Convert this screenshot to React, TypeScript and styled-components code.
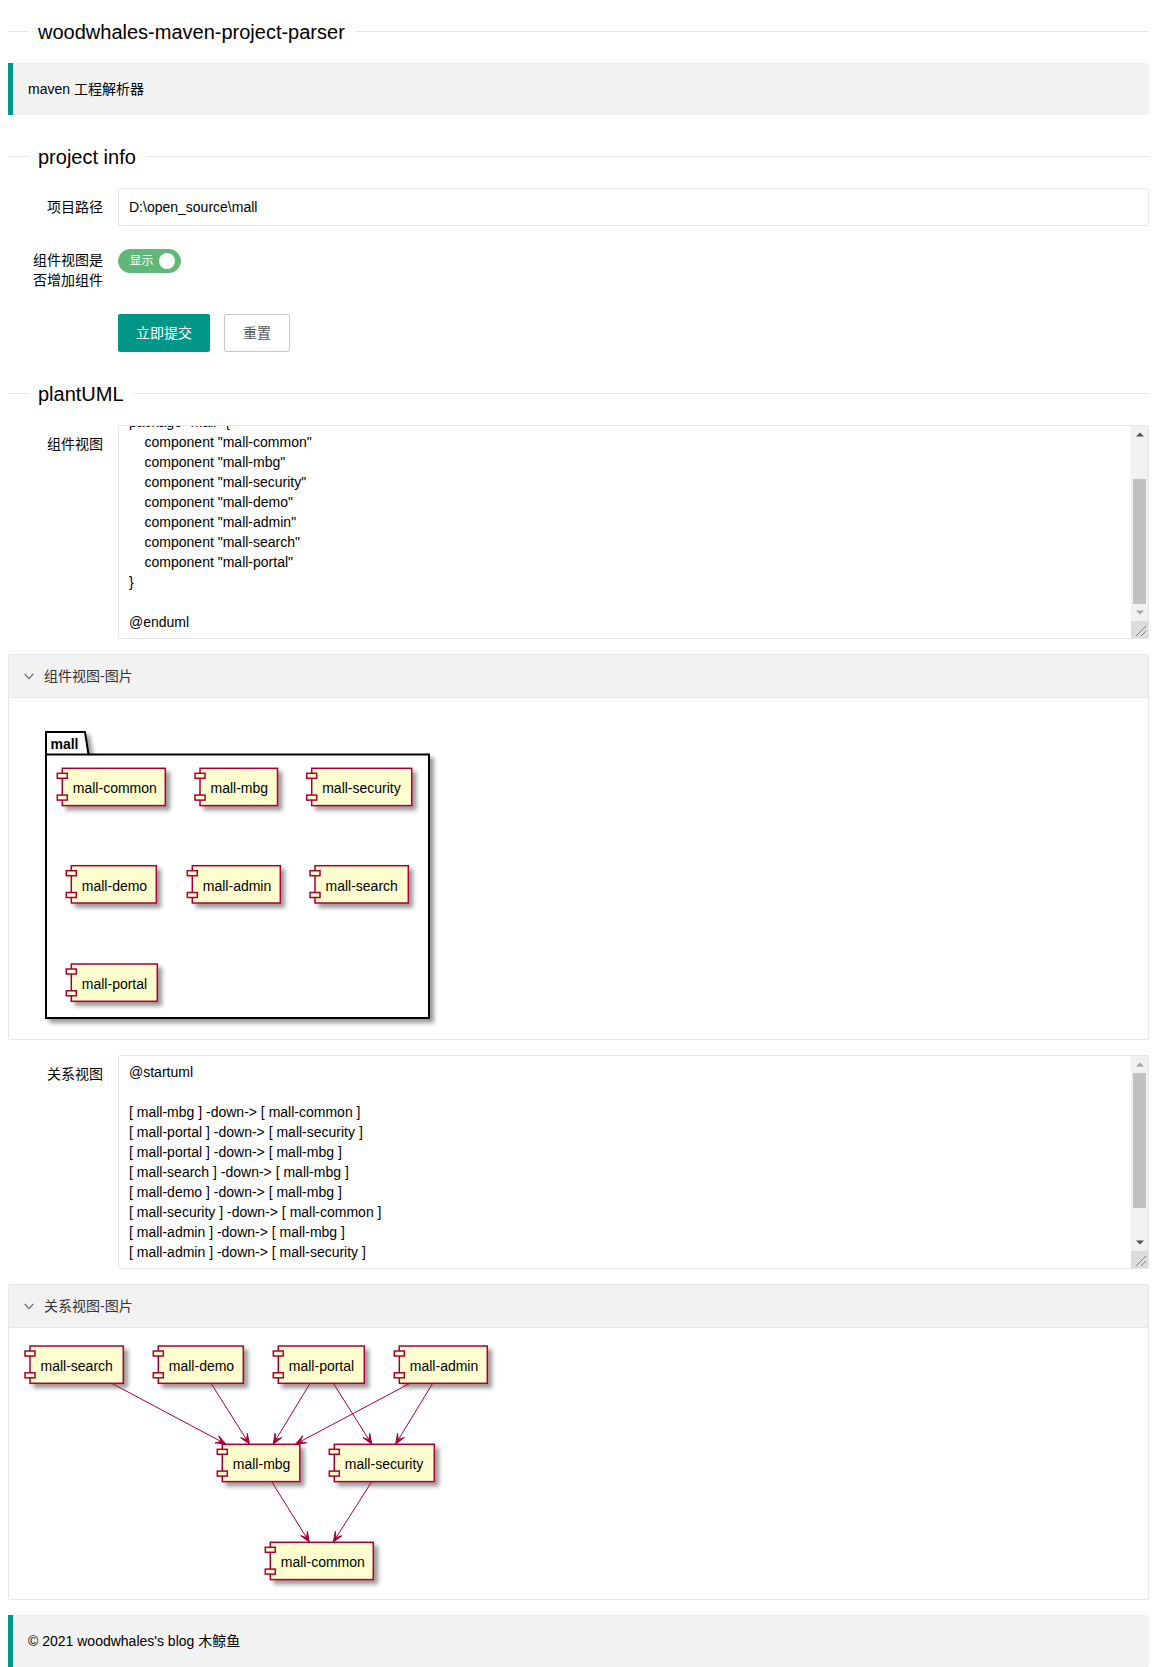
import React, { useLayoutEffect, useRef, useState } from "react";
import styled, { createGlobalStyle } from "styled-components";

const FONT = `"Liberation Sans", Arial, "Noto Sans CJK SC", sans-serif`;
const TEAL = "#009688";
const BORDER = "#e6e6e6";
const SB = 17;

const GlobalStyle = createGlobalStyle`
  html, body {
    margin: 0;
    padding: 0;
    background: #fff;
  }
  body {
    font-family: ${FONT};
    font-size: 14px;
    line-height: 24px;
    color: #000;
  }
`;

const Page = styled.div`
  padding: 20px 8px 0;
`;

const SectionTitle = styled.div<{ $mt?: number }>`
  display: flex;
  align-items: flex-start;
  height: 24px;
  margin-top: ${(p) => p.$mt ?? 0}px;
  font-size: 20px;
  font-weight: 300;
  color: #000;

  &::before,
  &::after {
    content: "";
    height: 0;
    margin-top: 11px;
    border-top: 1px solid ${BORDER};
  }
  &::before {
    width: 20px;
    flex: none;
  }
  &::after {
    flex: 1;
  }
`;

const TitleText = styled.span`
  padding: 0 10px;
  line-height: 24px;
  white-space: nowrap;
`;

const Quote = styled.div<{ $mt: number }>`
  margin-top: ${(p) => p.$mt}px;
  padding: 15px;
  line-height: 22px;
  border-left: 5px solid ${TEAL};
  border-radius: 0 2px 2px 0;
  background-color: #f2f2f2;
  color: #000;
`;

const Form = styled.div<{ $mt: number }>`
  display: flex;
  flex-direction: column;
  gap: 15px;
  margin-top: ${(p) => p.$mt}px;
`;

const FormItem = styled.div`
  display: flex;
  align-items: flex-start;
`;

const Label = styled.label`
  flex: 0 0 110px;
  box-sizing: border-box;
  padding: 9px 15px;
  line-height: 20px;
  text-align: right;
`;

const Field = styled.div`
  flex: 1;
  min-width: 0;
`;

const TextInput = styled.input`
  display: block;
  box-sizing: border-box;
  width: 100%;
  height: 38px;
  padding: 0 10px;
  border: 1px solid ${BORDER};
  border-radius: 2px;
  background: #fff;
  font: 14px ${FONT};
  line-height: 1.3;
  color: #000;
  outline: none;
`;

const Switch = styled.div`
  display: inline-flex;
  align-items: center;
  height: 22px;
  padding: 0 5px;
  margin-top: 8px;
  border: 1px solid #5fb878;
  border-radius: 20px;
  background-color: #5fb878;
`;

const SwitchText = styled.em`
  width: 25px;
  margin-left: 5px;
  font-style: normal;
  font-size: 12px;
  line-height: 22px;
  text-align: center;
  color: #fff;
  white-space: nowrap;
`;

const Knob = styled.i`
  width: 16px;
  height: 16px;
  margin-left: 5px;
  border-radius: 50%;
  background-color: #fff;
`;

const ButtonRow = styled.div`
  display: flex;
  gap: 14px;
`;

const Button = styled.button<{ $primary?: boolean }>`
  box-sizing: border-box;
  height: 38px;
  padding: 0 18px;
  border: ${(p) => (p.$primary ? "none" : "1px solid #C9C9C9")};
  border-radius: 2px;
  background-color: ${(p) => (p.$primary ? TEAL : "#fff")};
  color: ${(p) => (p.$primary ? "#fff" : "#555")};
  font: 14px ${FONT};
  line-height: ${(p) => (p.$primary ? 38 : 36)}px;
  white-space: nowrap;
  cursor: pointer;
`;

const ScrollBox = styled.div`
  position: relative;
`;

const CodeArea = styled.textarea`
  display: block;
  box-sizing: border-box;
  width: 100%;
  height: 214px;
  padding: 6px ${10 + SB}px 6px 10px;
  border: 1px solid ${BORDER};
  border-radius: 2px;
  background: #fff;
  font: 14px ${FONT};
  line-height: 20px;
  color: #000;
  resize: vertical;
  outline: none;
  scrollbar-width: none;
`;

/* drawn scrollbar that lies over the right edge of the textarea */
const FakeScrollbar = styled.div`
  position: absolute;
  top: 1px;
  right: 1px;
  bottom: 1px;
  width: ${SB}px;
  display: flex;
  flex-direction: column;
  background-color: #f1f1f1;
  pointer-events: none;
`;

const SbButton = styled.div`
  flex: none;
  height: ${SB}px;
  display: flex;
  align-items: center;
  justify-content: center;
`;

const SbTrack = styled.div`
  flex: 1;
  min-height: 0;
  overflow: hidden;
`;

const SbThumb = styled.div`
  margin: 0 2px;
  background-color: #c1c1c1;
`;

const SbCorner = styled.div`
  flex: none;
  height: ${SB}px;
  background-color: #dcdcdc;
`;

const Collapse = styled.div`
  margin-top: 15px;
  border: 1px solid ${BORDER};
  border-radius: 2px;
`;

const CollaTitle = styled.div`
  display: flex;
  align-items: center;
  height: 42px;
  padding: 0 15px;
  background-color: #f2f2f2;
  color: #333;
  line-height: 42px;
`;

const CollaIcon = styled.svg`
  flex: none;
  margin-right: 10px;
`;

const CollaContent = styled.div`
  padding: 10px 15px;
  border-top: 1px solid ${BORDER};
`;

const Diagram = styled.svg`
  display: block;
`;

function SbArrow({ up, disabled }: { up: boolean; disabled: boolean }) {
  const c = disabled ? "#a3a3a3" : "#505050";
  return (
    <svg width={8} height={5} viewBox="0 0 8 5">
      <polygon points={up ? "0,4.5 4,0.5 8,4.5" : "0,0.5 4,4.5 8,0.5"} fill={c} />
    </svg>
  );
}

function CodeBox({ value, toEnd }: { value: string; toEnd?: boolean }) {
  const ref = useRef<HTMLTextAreaElement>(null);
  const [sb, setSb] = useState({ top: 0, len: 0, atTop: true, atBottom: false });

  const measure = () => {
    const el = ref.current;
    if (!el) return;
    const track = el.clientHeight - SB * 3;
    const len = Math.max(20, (track * el.clientHeight) / el.scrollHeight);
    const max = el.scrollHeight - el.clientHeight;
    const top = max > 0 ? ((track - len) * el.scrollTop) / max : 0;
    setSb({ top, len, atTop: el.scrollTop <= 0, atBottom: el.scrollTop >= max - 1 });
  };

  useLayoutEffect(() => {
    const el = ref.current;
    if (el && toEnd) el.scrollTop = el.scrollHeight;
    measure();
  }, []);

  return (
    <ScrollBox>
      <CodeArea ref={ref} defaultValue={value} spellCheck={false} onScroll={measure} />
      <FakeScrollbar>
        <SbButton>
          <SbArrow up disabled={sb.atTop} />
        </SbButton>
        <SbTrack>
          <SbThumb style={{ marginTop: sb.top, height: sb.len }} />
        </SbTrack>
        <SbButton>
          <SbArrow up={false} disabled={sb.atBottom} />
        </SbButton>
        <SbCorner>
          <svg width={SB} height={SB} viewBox="0 0 17 17">
            <line x1={5} y1={15} x2={15} y2={5} stroke="#808080" strokeWidth={1} />
            <line x1={10} y1={15} x2={15} y2={10} stroke="#808080" strokeWidth={1} />
          </svg>
        </SbCorner>
      </FakeScrollbar>
    </ScrollBox>
  );
}

const PINK = "#A80036";
const FILL = "#FEFECE";
const CH = 37.3;
const WIDTHS: Record<string, number> = {
  "mall-common": 103,
  "mall-mbg": 77.5,
  "mall-security": 100,
  "mall-demo": 85,
  "mall-admin": 88,
  "mall-search": 93.3,
  "mall-portal": 86,
};

function ShadowDef({ id }: { id: string }) {
  return (
    <defs>
      <filter id={id} x="-1" y="-1" width="300%" height="300%">
        <feGaussianBlur in="SourceAlpha" stdDeviation="2" result="b" />
        <feColorMatrix
          in="b"
          type="matrix"
          values="0 0 0 0 0  0 0 0 0 0  0 0 0 0 0  0 0 0 .4 0"
          result="b2"
        />
        <feOffset in="b2" dx="4" dy="4" result="b3" />
        <feBlend in="SourceGraphic" in2="b3" mode="normal" />
      </filter>
    </defs>
  );
}

function UmlComp({ name, x, y, shadow }: { name: string; x: number; y: number; shadow: string }) {
  const w = WIDTHS[name];
  return (
    <g>
      <rect x={x} y={y} width={w} height={CH} fill={FILL} stroke={PINK} strokeWidth={1.5} filter={`url(#${shadow})`} />
      <rect x={x - 5} y={y + 5} width={10} height={5} fill={FILL} stroke={PINK} strokeWidth={1.5} />
      <rect x={x - 5} y={y + CH - 10.5} width={10} height={5} fill={FILL} stroke={PINK} strokeWidth={1.5} />
      <text x={x + 10.5} y={y + 25} fontSize={14} fontFamily={FONT} fill="#000">
        {name}
      </text>
    </g>
  );
}

function Arrow({ x1, y1, x2, y2 }: { x1: number; y1: number; x2: number; y2: number }) {
  const dx = x2 - x1;
  const dy = y2 - y1;
  const len = Math.hypot(dx, dy);
  const ux = dx / len;
  const uy = dy / len;
  const nx = -uy;
  const ny = ux;
  const back = 10;
  const half = 4;
  const notch = 5;
  const pts = [
    [x2, y2],
    [x2 - ux * back + nx * half, y2 - uy * back + ny * half],
    [x2 - ux * notch, y2 - uy * notch],
    [x2 - ux * back - nx * half, y2 - uy * back - ny * half],
  ]
    .map((p) => p.map((v) => v.toFixed(2)).join(","))
    .join(" ");
  return (
    <g>
      <line x1={x1} y1={y1} x2={x2 - ux * notch} y2={y2 - uy * notch} stroke={PINK} strokeWidth={1} />
      <polygon points={pts} fill={PINK} stroke={PINK} strokeWidth={1} />
    </g>
  );
}

function PackageDiagram() {
  const s = "shadowPkg";
  const comps = [
    { name: "mall-common", x: 38.3, y: 60.3 },
    { name: "mall-mbg", x: 176, y: 60.3 },
    { name: "mall-security", x: 287.7, y: 60.3 },
    { name: "mall-demo", x: 47.3, y: 157.7 },
    { name: "mall-admin", x: 168.3, y: 157.7 },
    { name: "mall-search", x: 291, y: 157.7 },
    { name: "mall-portal", x: 47.3, y: 256 },
  ];
  return (
    <Diagram width={440} height={321} viewBox="0 0 440 321">
      <ShadowDef id={s} />
      <path
        d="M22 24 H61 L64.5 46.5 H405 V310 H22 Z"
        fill="#fff"
        stroke="#000"
        strokeWidth={2}
        filter={`url(#${s})`}
      />
      <line x1={22} y1={46.5} x2={64.5} y2={46.5} stroke="#000" strokeWidth={2} />
      <text x={26.5} y={40.5} fontSize={14} fontWeight="bold" fontFamily={FONT} fill="#000">
        mall
      </text>
      {comps.map((c) => (
        <UmlComp key={c.name} {...c} shadow={s} />
      ))}
    </Diagram>
  );
}

function RelationDiagram() {
  const s = "shadowRel";
  const comps = [
    { name: "mall-search", x: 6, y: 8 },
    { name: "mall-demo", x: 134.3, y: 8 },
    { name: "mall-portal", x: 254.3, y: 8 },
    { name: "mall-admin", x: 375.3, y: 8 },
    { name: "mall-mbg", x: 198.3, y: 106.3 },
    { name: "mall-security", x: 310.3, y: 106.3 },
    { name: "mall-common", x: 246.3, y: 204.3 },
  ];
  const arrows = [
    [87.7, 45.3, 201.7, 106],
    [187, 45.3, 225.3, 106],
    [286, 45.3, 249.3, 106],
    [386, 45.3, 271.7, 106],
    [309.3, 45.3, 347.7, 106],
    [408.7, 45.3, 371.7, 106],
    [247.7, 143.7, 285.3, 204],
    [347.7, 143.7, 309.3, 204],
  ];
  return (
    <Diagram width={480} height={251} viewBox="0 0 480 251">
      <ShadowDef id={s} />
      {comps.map((c) => (
        <UmlComp key={c.name} {...c} shadow={s} />
      ))}
      {arrows.map(([x1, y1, x2, y2], i) => (
        <Arrow key={i} x1={x1} y1={y1} x2={x2} y2={y2} />
      ))}
    </Diagram>
  );
}

function Chevron() {
  return (
    <CollaIcon width={10} height={7} viewBox="0 0 10 7">
      <polyline points="0.7,0.8 5,5.6 9.3,0.8" fill="none" stroke="#666" strokeWidth={1.2} />
    </CollaIcon>
  );
}

const COMPONENT_UML = `@startuml

package "mall" {
    component "mall-common"
    component "mall-mbg"
    component "mall-security"
    component "mall-demo"
    component "mall-admin"
    component "mall-search"
    component "mall-portal"
}

@enduml`;

const RELATION_UML = `@startuml

[ mall-mbg ] -down-> [ mall-common ]
[ mall-portal ] -down-> [ mall-security ]
[ mall-portal ] -down-> [ mall-mbg ]
[ mall-search ] -down-> [ mall-mbg ]
[ mall-demo ] -down-> [ mall-mbg ]
[ mall-security ] -down-> [ mall-common ]
[ mall-admin ] -down-> [ mall-mbg ]
[ mall-admin ] -down-> [ mall-security ]

@enduml`;

export default function App() {
  return (
    <>
      <GlobalStyle />
      <Page>
        <SectionTitle>
          <TitleText>woodwhales-maven-project-parser</TitleText>
        </SectionTitle>
        <Quote $mt={19}>maven 工程解析器</Quote>

        <SectionTitle $mt={30}>
          <TitleText>project info</TitleText>
        </SectionTitle>
        <Form $mt={19}>
          <FormItem>
            <Label>项目路径</Label>
            <Field>
              <TextInput defaultValue={"D:\\open_source\\mall"} />
            </Field>
          </FormItem>
          <FormItem>
            <Label>组件视图是否增加组件</Label>
            <Field>
              <Switch>
                <SwitchText>显示</SwitchText>
                <Knob />
              </Switch>
            </Field>
          </FormItem>
          <FormItem>
            <Label />
            <Field>
              <ButtonRow>
                <Button $primary>立即提交</Button>
                <Button>重置</Button>
              </ButtonRow>
            </Field>
          </FormItem>
        </Form>

        <SectionTitle $mt={30}>
          <TitleText>plantUML</TitleText>
        </SectionTitle>
        <Form $mt={19}>
          <FormItem>
            <Label>组件视图</Label>
            <Field>
              <CodeBox value={COMPONENT_UML} toEnd />
            </Field>
          </FormItem>
        </Form>

        <Collapse>
          <CollaTitle>
            <Chevron />
            组件视图-图片
          </CollaTitle>
          <CollaContent>
            <PackageDiagram />
          </CollaContent>
        </Collapse>

        <Form $mt={15}>
          <FormItem>
            <Label>关系视图</Label>
            <Field>
              <CodeBox value={RELATION_UML} />
            </Field>
          </FormItem>
        </Form>

        <Collapse>
          <CollaTitle>
            <Chevron />
            关系视图-图片
          </CollaTitle>
          <CollaContent>
            <RelationDiagram />
          </CollaContent>
        </Collapse>

        <Quote $mt={15}>© 2021 woodwhales's blog 木鲸鱼</Quote>
      </Page>
    </>
  );
}
